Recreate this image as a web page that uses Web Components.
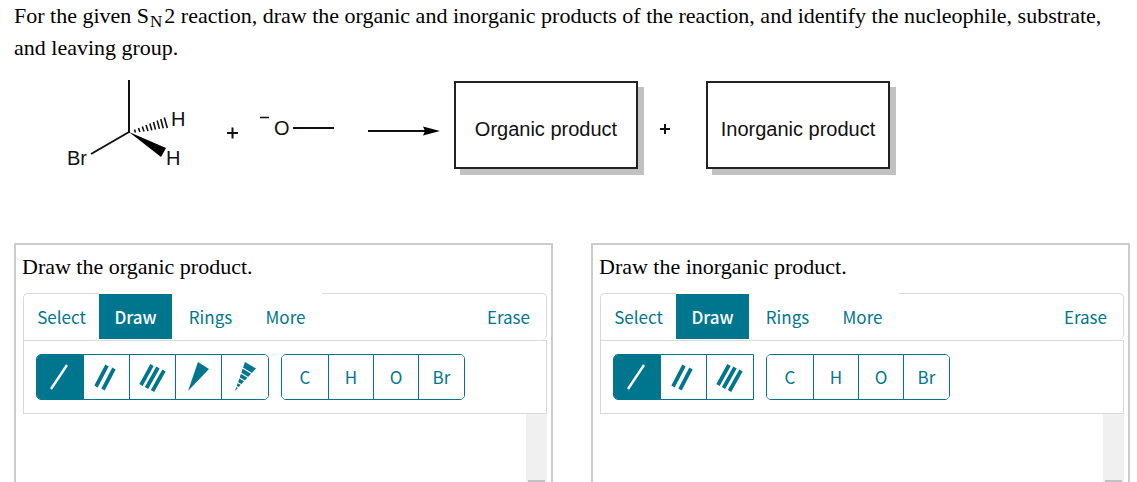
<!DOCTYPE html>
<html lang="en">
<head>
<meta charset="utf-8">
<title>SN2 reaction products</title>
<style>
  html { height: 100%; }
  body { margin: 0; height: 100%; background: #fff; color: #000; font: 22px/32px "Liberation Serif", "Times New Roman", serif; }
</style>
</head>
<body>
<reaction-question></reaction-question>
<script>
class ReactionScheme extends HTMLElement {
  constructor() {
    super();
    this.attachShadow({ mode: "open" }).innerHTML = `
      <style>
        :host { display: flex; align-items: center; font: 20px/24px "Liberation Sans", Arial, sans-serif; color: #111; }
        svg { flex: none; display: block; margin-right: 10px; }
        .plus { flex: none; width: 68px; box-sizing: border-box; padding: 8px 14px 0 0; display: flex; justify-content: center; }
        .plus svg { margin: 0; }
      </style>
      <svg width="380" height="96" viewBox="0 0 380 96" role="img" aria-label="Bromoethane plus methoxide" font-family="Liberation Sans, Arial, sans-serif" font-size="20" fill="#111">
        <g stroke="#111" stroke-width="2" fill="none">
          <path d="M65 3V56M65 55L27 77"/>
          <path stroke-width="1.6" d="M70.500 52.500l1 3M74.500 51l1.400 4M78.300 49.400l1.700 5M82 48l2 6M85.800 46.500l2 6.800M89.500 45l2 7.600M93.200 43.500l2.200 8.400M96.800 42l2.400 9.200M100.300 40.500l3 10.500"/>
          <path d="M163 56H174M168.500 50.500V61.500"/>
          <path d="M229 51H270M304 54H362"/>
          <path stroke-width="1.500" d="M196 40.500H205"/>
        </g>
        <path d="M65 55L102 71L97 80Z" fill="#000"/>
        <path d="M376 54L359 58.500L361 54L359 49.500Z" fill="#000"/>
        <text x="107" y="49">H</text>
        <text x="102" y="88">H</text>
        <text x="3" y="88">Br</text>
        <text x="210" y="58">O</text>
      </svg>
      <slot name="first"></slot>
      <span class="plus"><svg width="12" height="12" viewBox="0 0 12 12" role="img" aria-label="plus"><path d="M1 6H11M6 1V11" stroke="#111" stroke-width="2"/></svg></span>
      <slot name="second"></slot>`;
  }
}
customElements.define("reaction-scheme", ReactionScheme);

class ProductBox extends HTMLElement {
  constructor() {
    super();
    this.attachShadow({ mode: "open" }).innerHTML = `
      <style>
        :host { display: flex; flex: none; box-sizing: border-box; width: 184px; height: 88px; padding-top: 8px; align-items: center; justify-content: center; border: 2px solid #222; background: #fff; box-shadow: 6px 6px 0 #c1c1c1; white-space: nowrap; }
      </style><slot></slot>`;
  }
}
customElements.define("product-box", ProductBox);

const BONDS = {
  single: ["Single bond", `<path d="M-8 12L8 -12" stroke-width="2.400"/>`],
  double: ["Double bond", `<path d="M-10 9.500L1 -11.500M-3 12.500L8 -8.500" stroke-width="3.800"/>`],
  triple: ["Triple bond", `<path d="M-11 8L0 -12M-5.500 11L6 -9.500M0.500 14L12 -6.500" stroke-width="3.800"/>`],
  wedge: ["Wedge bond", `<path d="M-10 14L0 -15L11 -8Z" fill="currentColor" stroke="none"/>`],
  hash: ["Hashed bond", `<path d="M-9 14L1 -15L12 -8.500Z" fill="currentColor" stroke="none"/><path d="M-3 -10L11 -1.500M-5 -5L9 3.500M-6 0L5 6.500M-8 4.500L3 11M-9 8.500L0 14" stroke="#fff" stroke-width="1.200"/>`]
};

class SketchPanel extends HTMLElement {
  constructor() {
    super();
    const bonds = this.getAttribute("bonds").split(" ");
    const atoms = this.getAttribute("atoms").split(" ");
    this.attachShadow({ mode: "open" }).innerHTML = `
      <style>
        :host { display: flex; flex-direction: column; border: solid #ccc; border-width: 2px 2px 0; padding: 6px 4px 0 7px; --teal: #00768e; --line: #d9d9d9; }
        h2 { margin: 0 0 10px -1px; font: inherit; }
        button { margin: 0; padding: 0; border: 0; border-radius: 0; background: #fff; color: var(--teal); font: 17px/24px "Noto Sans CJK SC", sans-serif; }
        nav { display: grid; grid-template-columns: 76px 73px 77px 73px 1fr; height: 47px; }
        nav button { margin: 1px 0; }
        nav .select { margin: 0; border: solid var(--line); border-width: 1px 0 0 1px; border-radius: 5px 0 0 0; }
        nav .draw { background: var(--teal); color: #fff; font-weight: 500; }
        .rest { display: flex; justify-content: flex-end; border: solid var(--line); border-width: 1px 1px 0 0; border-radius: 0 5px 5px 0; padding-right: 16px; }
        .tools { display: flex; gap: 12px; padding: 13px 12px; border: 1px solid var(--line); }
        .group { display: flex; border: 1px solid var(--teal); border-radius: 5px; overflow: hidden; }
        .group.square { border-radius: 5px 0 0 5px; }
        .group button { display: grid; place-items: center; width: 46px; height: 44px; border-right: 1px solid var(--teal); }
        .group button:first-child { width: 47px; }
        .group button:last-child { border-right: 0; }
        .group .on { background: var(--teal); color: #fff; }
        .atoms button { width: 45px; }
        svg { display: block; }
        .canvas { display: flex; justify-content: flex-end; flex: 1; min-height: 68px; }
        .track { display: flex; flex-direction: column; width: 21px; box-sizing: border-box; padding: 66px 2px 0; background: #f0f0f0; }
        .thumb { flex: 1; background: #c1c1c1; }
      </style>
      <h2><slot></slot></h2>
      <nav>
        <button class="select">Select</button><button class="draw">Draw</button><button>Rings</button><button>More</button>
        <div class="rest"><button>Erase</button></div>
      </nav>
      <div class="tools">
        <div class="group ${bonds.length < 5 ? "square" : ""}">${bonds.map((b, i) => `<button class="${i ? "" : "on"}" aria-label="${BONDS[b][0]}"><svg width="32" height="32" viewBox="-15 -16 32 32" fill="none" stroke="currentColor">${BONDS[b][1]}</svg></button>`).join("")}</div>
        <div class="group atoms">${atoms.map(a => `<button>${a}</button>`).join("")}</div>
      </div>
      <div class="canvas"><div class="track"><div class="thumb"></div></div></div>`;
  }
}
customElements.define("sketch-panel", SketchPanel);

class ReactionQuestion extends HTMLElement {
  constructor() {
    super();
    this.attachShadow({ mode: "open" }).innerHTML = `
      <style>
        :host { display: flex; flex-direction: column; box-sizing: border-box; min-height: 100%; padding: 0 7px 0 14px; }
        p { margin: 0; }
        sub { font-size: 17px; line-height: 0; vertical-align: -4px; margin: 0 2px 0 1px; }
        reaction-scheme { margin: 13px 0 70px 50px; }
        .panels { flex: 1; display: grid; grid-template-columns: 1fr 1fr; gap: 38px; }
      </style>
      <p>For the given S<sub>N</sub>2 reaction, draw the organic and inorganic products of the reaction, and identify the nucleophile, substrate, and leaving group.</p>
      <reaction-scheme>
        <product-box slot="first">Organic product</product-box>
        <product-box slot="second">Inorganic product</product-box>
      </reaction-scheme>
      <div class="panels">
        <sketch-panel bonds="single double triple wedge hash" atoms="C H O Br">Draw the organic product.</sketch-panel>
        <sketch-panel bonds="single double triple" atoms="C H O Br">Draw the inorganic product.</sketch-panel>
      </div>`;
  }
}
customElements.define("reaction-question", ReactionQuestion);
</script>
</body>
</html>
